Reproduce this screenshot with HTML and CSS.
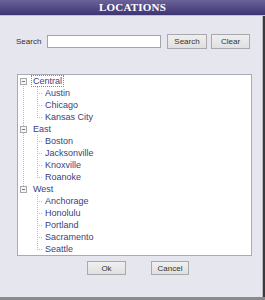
FILE: index.html
```html
<!DOCTYPE html>
<html lang="en">
<head>
    <meta charset="UTF-8">
    <title>Locations</title>
    <link rel="stylesheet" href="styles.css">
</head>
<body>
    <div class="dialog">
        <div class="titlebar">LOCATIONS</div>

        <div class="panel">
            <div class="search-row">
                <label class="search-label" for="q">Search</label>
                <input id="q" class="search-input" type="text">
                <button class="btn btn-search">Search</button>
                <button class="btn btn-clear">Clear</button>
            </div>

            <div class="tree-box">
                <ul class="tree">
                    <li class="root">
                        <div class="row">
                            <svg class="toggle" width="7" height="7" viewBox="0 0 7 7"><rect x="0.5" y="0.5" width="6" height="6" fill="#f6f6f6" stroke="#a8a8a8"/><line x1="2" y1="3.5" x2="5" y2="3.5" stroke="#777"/></svg>
                            <span class="label focused">Central</span>
                        </div>
                        <ul class="children">
                            <li class="leaf">Austin</li>
                            <li class="leaf">Chicago</li>
                            <li class="leaf">Kansas City</li>
                        </ul>
                    </li>
                    <li class="root">
                        <div class="row">
                            <svg class="toggle" width="7" height="7" viewBox="0 0 7 7"><rect x="0.5" y="0.5" width="6" height="6" fill="#f6f6f6" stroke="#a8a8a8"/><line x1="2" y1="3.5" x2="5" y2="3.5" stroke="#777"/></svg>
                            <span class="label">East</span>
                        </div>
                        <ul class="children">
                            <li class="leaf">Boston</li>
                            <li class="leaf">Jacksonville</li>
                            <li class="leaf">Knoxville</li>
                            <li class="leaf">Roanoke</li>
                        </ul>
                    </li>
                    <li class="root">
                        <div class="row">
                            <svg class="toggle" width="7" height="7" viewBox="0 0 7 7"><rect x="0.5" y="0.5" width="6" height="6" fill="#f6f6f6" stroke="#a8a8a8"/><line x1="2" y1="3.5" x2="5" y2="3.5" stroke="#777"/></svg>
                            <span class="label">West</span>
                        </div>
                        <ul class="children">
                            <li class="leaf">Anchorage</li>
                            <li class="leaf">Honolulu</li>
                            <li class="leaf">Portland</li>
                            <li class="leaf">Sacramento</li>
                            <li class="leaf">Seattle</li>
                        </ul>
                    </li>
                </ul>
            </div>

            <div class="actions">
                <button class="btn btn-ok">Ok</button>
                <button class="btn btn-cancel">Cancel</button>
            </div>
        </div>

        <div class="taskbar"></div>
    </div>
</body>
</html>
```

FILE: styles.css
```css
html, body {
    margin: 0;
    padding: 0;
}
body {
    width: 265px;
    height: 300px;
    overflow: hidden;
    background: #e6e6ee;
    font-family: "Liberation Sans", Arial, sans-serif;
}
.dialog {
    display: flex;
    flex-direction: column;
    height: 300px;
}
.titlebar {
    height: 15px;
    line-height: 15px;
    border-bottom: 1px solid #c4c2d6;
    background: linear-gradient(#6a6299, #3d3572);
    color: #fff;
    text-align: center;
    font-family: "Liberation Serif", "Times New Roman", serif;
    font-weight: bold;
    font-size: 11px;
    letter-spacing: 0.2px;
}
.panel {
    flex: 1;
    border-right: 2px solid #3a3a3a;
    box-shadow: inset -1px 0 0 #b9b9c4;
}

/* search row */
.search-row {
    display: flex;
    align-items: center;
    height: 15px;
    margin-top: 18px;
    padding-left: 16px;
    font-size: 8px;
    color: #333;
}
.search-label {
    width: 31px;
}
.search-input {
    box-sizing: border-box;
    width: 114px;
    height: 13px;
    margin: 0 6px 0 0;
    padding: 0;
    border: 1px solid #a3a3a8;
    background: #fff;
}
.btn {
    box-sizing: border-box;
    height: 15px;
    padding: 0;
    border: 1px solid #a9a9ad;
    background: linear-gradient(#efefef, #e0e0e2);
    color: #333;
    font-family: "Liberation Sans", Arial, sans-serif;
    font-size: 8px;
}
.btn-search { width: 40px; margin-right: 4px; }
.btn-clear { width: 39px; }

/* tree */
.tree-box {
    box-sizing: border-box;
    width: 235px;
    height: 182px;
    margin: 25px 0 0 17px;
    border: 1px solid #aaaab4;
    background: #fff;
}
.tree, .children {
    list-style: none;
    margin: 0;
    padding: 0;
}
.tree {
    font-size: 9px;
    line-height: 12px;
    color: #40407e;
}
.root {
    background-image: repeating-linear-gradient(#bdbdbd 0 1px, transparent 1px 2px);
    background-repeat: no-repeat;
    background-size: 1px 100%;
    background-position: 5px 0;
}
.root:first-child { background-position: 5px 9px; }
.root:last-child { background-size: 1px 3px; }
.row {
    display: flex;
    align-items: center;
    height: 12px;
}
.toggle {
    margin-left: 2px;
    margin-right: 4px;
    flex: none;
}
.label {
    padding: 0 1px;
    border: 1px dotted transparent;
    line-height: 10px;
}
.label.focused {
    border-color: #8a8a8a;
}
.leaf {
    height: 12px;
    padding-left: 27px;
    background-image:
        repeating-linear-gradient(#bdbdbd 0 1px, transparent 1px 2px),
        repeating-linear-gradient(90deg, #bdbdbd 0 1px, transparent 1px 2px);
    background-repeat: no-repeat;
    background-size: 1px 100%, 6px 1px;
    background-position: 19px 0, 19px 6px;
}
.leaf:last-child {
    background-size: 1px 7px, 6px 1px;
}

/* bottom buttons */
.actions {
    display: flex;
    gap: 25px;
    margin-top: 5px;
    padding-left: 87px;
}
.btn-ok { width: 39px; height: 14px; }
.btn-cancel { width: 38px; height: 14px; }

.taskbar {
    height: 3px;
    background: #8a8a8c;
}
```
